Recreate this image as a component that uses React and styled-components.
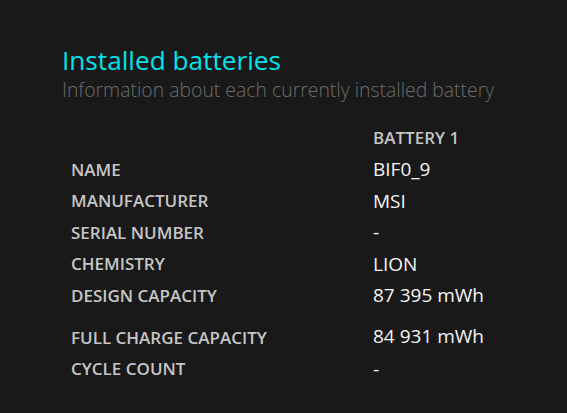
import React from 'react';
import styled, { createGlobalStyle } from 'styled-components';

const GlobalStyle = createGlobalStyle`
  html, body {
    margin: 0;
    padding: 0;
    background: #191919;
  }
  body {
    font-family: "Open Sans", "Noto Sans", sans-serif;
  }
`;

const Page = styled.div`
  width: 567px;
  height: 413px;
  box-sizing: border-box;
  padding: 43px 0 0 62px;
  background: #191919;
`;

const Title = styled.h1`
  margin: 0;
  font-size: 26.2px;
  line-height: 34px;
  font-weight: 400;
  color: #00e3ec;
`;

const Subtitle = styled.p`
  margin: 0;
  font-size: 19.4px;
  line-height: 26px;
  font-weight: 300;
  color: #6c6c6c;
`;

const Table = styled.div`
  display: grid;
  grid-template-columns: 302px auto;
  margin: 19px 0 0 9px;
`;

const Cell = styled.div`
  height: ${(p) => (p.tall ? '42px' : '31.5px')};
  display: flex;
  align-items: ${(p) => (p.tall ? 'flex-end' : 'center')};
  padding-bottom: ${(p) => (p.tall ? '4px' : '0')};
  box-sizing: border-box;
  white-space: nowrap;
`;

const Label = styled(Cell)`
  font-size: 17px;
  font-weight: 600;
  color: #c6c6c6;
`;

const Value = styled(Cell)`
  font-size: 19px;
  font-weight: 400;
  color: #f4f4f4;
`;

const rows = [
  ['NAME', 'BIF0_9'],
  ['MANUFACTURER', 'MSI'],
  ['SERIAL NUMBER', '-'],
  ['CHEMISTRY', 'LION'],
  ['DESIGN CAPACITY', '87 395 mWh'],
  ['FULL CHARGE CAPACITY', '84 931 mWh', true],
  ['CYCLE COUNT', '-'],
];

export default function App() {
  return (
    <Page>
      <GlobalStyle />
      <Title>Installed batteries</Title>
      <Subtitle>Information about each currently installed battery</Subtitle>
      <Table>
        <Label />
        <Label>BATTERY 1</Label>
        {rows.map(([name, value, tall]) => (
          <React.Fragment key={name}>
            <Label tall={tall}>{name}</Label>
            <Value tall={tall}>{value}</Value>
          </React.Fragment>
        ))}
      </Table>
    </Page>
  );
}
